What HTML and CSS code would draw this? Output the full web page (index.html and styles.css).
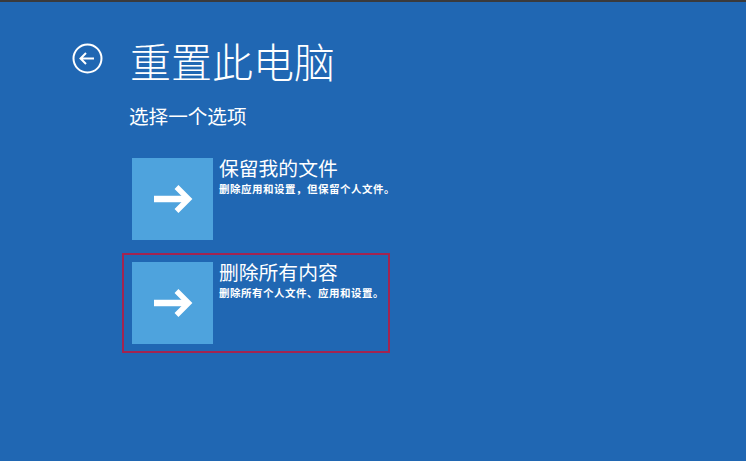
FILE: index.html
```html
<!DOCTYPE html>
<html lang="zh-CN">
<head>
<meta charset="utf-8">
<title>重置此电脑</title>
<link rel="stylesheet" href="styles.css">
</head>
<body>
<div class="screen">
  <div class="header">
    <svg class="back" width="31" height="31" viewBox="0 0 31 31">
      <circle cx="15.5" cy="15.5" r="14" fill="none" stroke="#fff" stroke-width="2"/>
      <path d="M8.5 15.5 H22 M14 10 L8.5 15.5 L14 21" fill="none" stroke="#fff" stroke-width="2" stroke-linejoin="miter"/>
    </svg>
    <h1 class="title">重置此电脑</h1>
  </div>
  <div class="subtitle">选择一个选项</div>
  <div class="options">
    <div class="option">
      <div class="tile">
        <svg width="40" height="32" viewBox="0 0 40 32"><path d="M1 16 H33" stroke="#fff" stroke-width="6.5"/><path d="M23.5 4 L35.5 16 L23.5 28" fill="none" stroke="#fff" stroke-width="5.5"/></svg>
      </div>
      <div class="text">
        <div class="opt-title">保留我的文件</div>
        <div class="opt-desc">删除应用和设置，但保留个人文件。</div>
      </div>
    </div>
    <div class="option selected">
      <div class="tile">
        <svg width="40" height="32" viewBox="0 0 40 32"><path d="M1 16 H33" stroke="#fff" stroke-width="6.5"/><path d="M23.5 4 L35.5 16 L23.5 28" fill="none" stroke="#fff" stroke-width="5.5"/></svg>
      </div>
      <div class="text">
        <div class="opt-title">删除所有内容</div>
        <div class="opt-desc">删除所有个人文件、应用和设置。</div>
      </div>
    </div>
  </div>
</div>
</body>
</html>
```

FILE: styles.css
```css
html, body {
  margin: 0;
  padding: 0;
}
body {
  width: 746px;
  height: 461px;
  overflow: hidden;
  background: #2067b3;
  border-top: 2px solid #3a3a3c;
  box-sizing: border-box;
  font-family: "Noto Sans CJK SC", "Noto Sans", sans-serif;
  color: #fff;
}
.screen {
  padding: 38px 0 0 72px;
}
.header {
  display: flex;
  align-items: flex-start;
}
.back {
  display: block;
  margin-top: 3px;
  flex: none;
}
.title {
  margin: 0 0 0 27px;
  font-size: 41px;
  font-weight: 300;
  line-height: 41px;
  letter-spacing: 0;
}
.subtitle {
  margin: 25px 0 0 57px;
  font-size: 19.6px;
  line-height: 20px;
  font-weight: 400;
}
.options {
  margin: 23px 0 0 50px;
  display: flex;
  flex-direction: column;
  gap: 4px;
}
.option {
  width: 268px;
  box-sizing: border-box;
  border: 2px solid transparent;
  padding: 7px 8px 7px 8px;
  display: flex;
  align-items: flex-start;
  gap: 6px;
}
.option.selected {
  border-color: #a32450;
}
.tile {
  width: 81px;
  height: 82px;
  flex: none;
  background: #4ea3dd;
  display: flex;
  align-items: center;
  justify-content: center;
}
.tile svg {
  display: block;
}
.text {
  display: flex;
  flex-direction: column;
}
.opt-title {
  font-size: 19.8px;
  line-height: 20px;
  font-weight: 400;
}
.opt-desc {
  margin-top: 5px;
  font-size: 10.5px;
  line-height: 12px;
  font-weight: 700;
  letter-spacing: 0.5px;
  white-space: nowrap;
}
```
